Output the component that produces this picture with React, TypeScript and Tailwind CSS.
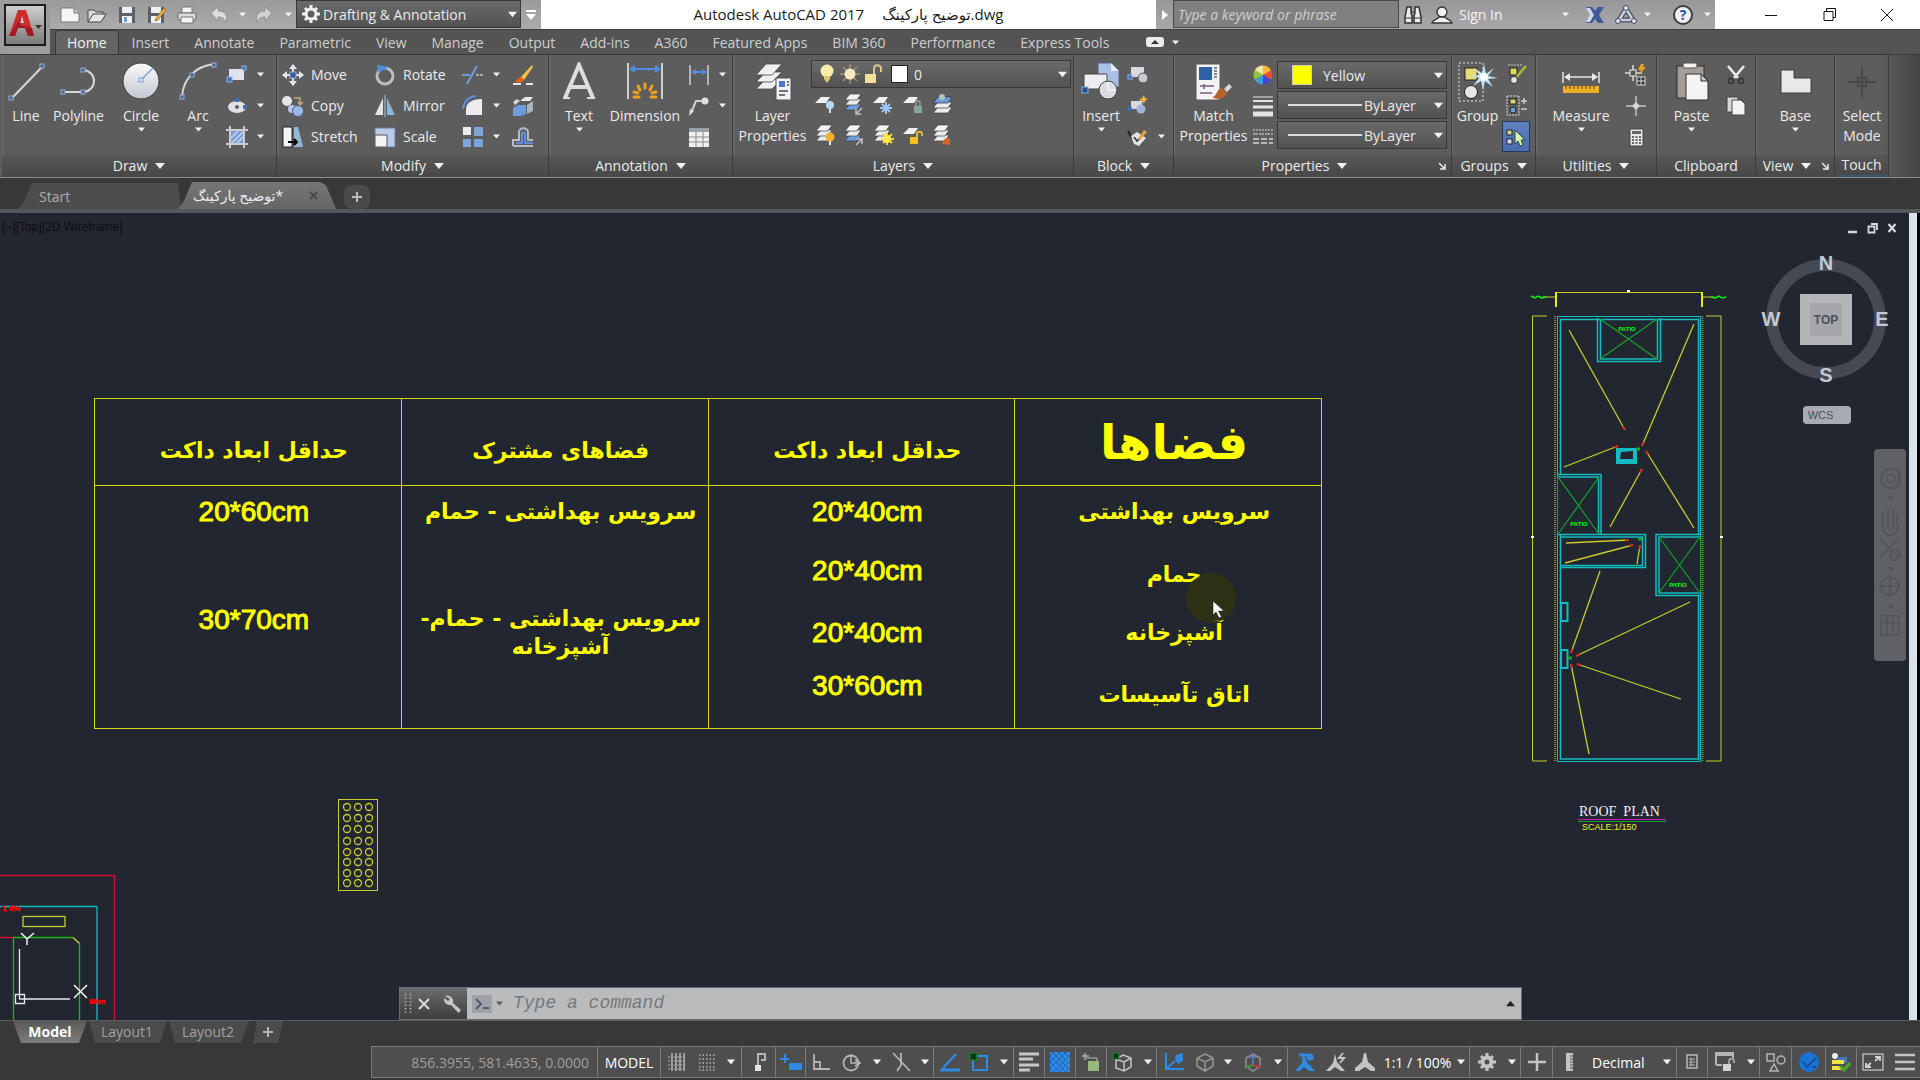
import React from "react";

type Kids = { children?: React.ReactNode };

const Svg = ({ w = 22, h = 22, children }: { w?: number; h?: number } & Kids) => (
  <svg width={w} height={h} viewBox={`0 0 ${w} ${h}`} fill="none" className="block shrink-0" aria-hidden="true">
    {children}
  </svg>
);

const Tri = ({ size = 7, color = "#f2f2f2", up = false }: { size?: number; color?: string; up?: boolean }) => (
  <svg width={size} height={size} viewBox="0 0 10 10" className="block shrink-0" aria-hidden="true">
    <path d={up ? "M0 8h10L5 2z" : "M0 2h10L5 8z"} fill={color} />
  </svg>
);

const Grip = ({ x, y }: { x: number; y: number }) => (
  <rect x={x - 2} y={y - 2} width="4" height="4" fill="#55607a" stroke="#8fb0ea" strokeWidth="1" />
);

/* ---------- large ribbon icons (40 x 40) ---------- */

const LineIcon = () => (
  <Svg w={40} h={40}>
    <path d="M6 36 36 5" stroke="#d8d8d8" strokeWidth="2" />
    <Grip x={5} y={36} />
    <Grip x={36} y={4} />
  </Svg>
);
const PolylineIcon = () => (
  <Svg w={40} h={40}>
    <path d="M3 30h21a11 11 0 0 0 0-22" stroke="#d8d8d8" strokeWidth="2" />
    <Grip x={4} y={30} />
    <Grip x={24} y={30} />
    <Grip x={24} y={8} />
  </Svg>
);
const CircleIcon = () => (
  <Svg w={40} h={40}>
    <defs>
      <linearGradient id="ball" x1="0" y1="0" x2="0" y2="1">
        <stop offset="0" stopColor="#fafafc" />
        <stop offset="1" stopColor="#c4c7d2" />
      </linearGradient>
    </defs>
    <circle cx="20" cy="19" r="18" fill="url(#ball)" stroke="#3a3a3a" strokeWidth="1" />
    <path d="M20 18 32 6" stroke="#7f9fdf" strokeWidth="1.5" />
    <rect x="18" y="16" width="4" height="4" fill="#dfe4f0" stroke="#7f9fdf" />
  </Svg>
);
const ArcIcon = () => (
  <Svg w={40} h={40}>
    <path d="M4 35C5 18 16 4 37 2" stroke="#d8d8d8" strokeWidth="2" />
    <Grip x={4} y={35} />
    <Grip x={14} y={13} />
    <Grip x={36} y={3} />
  </Svg>
);
const TextIcon = () => (
  <Svg w={40} h={40}>
    <path d="M6 36 20 3l14 33M11 25h18" stroke="#dedede" strokeWidth="4" />
    <path d="M4 36h7M28 36h8" stroke="#dedede" strokeWidth="2" />
  </Svg>
);
const DimensionIcon = () => (
  <Svg w={40} h={40}>
    <path d="M3 1v36M37 1v36" stroke="#cfcfcf" strokeWidth="2" />
    <path d="M5 7h30" stroke="#4f8ee0" strokeWidth="2" />
    <path d="M4 7l6-4v8zM36 7l-6-4v8z" fill="#4f8ee0" />
    <path d="M20 22v4M13 24l2 4M27 24l-2 4M9 30l4 1M31 30l-4 1M9 35h5M31 35h-5" stroke="#f0a020" strokeWidth="3" strokeLinecap="round" />
  </Svg>
);
const LayerPropsIcon = () => (
  <Svg w={40} h={40}>
    <g fill="#f0f0f0" stroke="#444" strokeWidth=".8">
      <path d="M3 27 13 17h16L19 27z" />
      <path d="M3 20 13 10h16L19 20z" />
      <path d="M3 13 13 2h16L19 13z" />
    </g>
    <rect x="23" y="16" width="15" height="22" fill="#f2f2f4" stroke="#555" />
    <rect x="26" y="19" width="6" height="6" fill="#4a78c4" />
    <path d="M34 20h2M34 23h2M26 29h9M26 33h6" stroke="#445" strokeWidth="1.5" />
  </Svg>
);
const InsertIcon = () => (
  <Svg w={40} h={40}>
    <path d="M17 1h13l8 8v16H17z" fill="#a9bfe4" stroke="#51648c" />
    <path d="M30 1v8h8z" fill="#e4ecfa" />
    <rect x="3" y="12" width="23" height="15" rx="1" fill="#eeeef2" stroke="#444" />
    <circle cx="27" cy="28" r="9" fill="#dcdde2" stroke="#444" />
    <path d="M27 20v8h8" stroke="#fff" />
    <rect x="1" y="25" width="6" height="6" fill="#2f4f86" stroke="#7fb0f0" />
  </Svg>
);
const MatchIcon = () => (
  <Svg w={40} h={40}>
    <rect x="2" y="2" width="24" height="36" fill="#f3f3f5" stroke="#555" />
    <rect x="5" y="5" width="13" height="13" fill="#2d62a4" />
    <path d="M20 6h3M20 9h3M20 12h3M20 15h3" stroke="#567" strokeWidth="1.5" />
    <path d="M6 24h14M10 22v5M6 31h12" stroke="#7a5a78" strokeWidth="1.5" />
    <path d="M18 35c5 0 4-8 10-9l5 5c-2 7-10 7-15 4z" fill="#b3642a" />
    <path d="M30 27l5-5 3 3-5 5z" fill="#d9d9d9" />
  </Svg>
);
const GroupIcon = () => (
  <Svg w={40} h={40}>
    <rect x="1" y="1" width="24" height="38" stroke="#e6e6e6" strokeDasharray="2 2" />
    <rect x="7" y="6" width="12" height="12" fill="#e6dc74" stroke="#222" />
    <circle cx="13" cy="30" r="6.5" fill="#e6e6e8" stroke="#222" />
    <path d="M26 2l2 10 8-6-6 8 10 2-10 1 5 8-8-6-2 9-2-9-8 5 6-8-9-2 9-1-5-7 8 5z" fill="#bfe4fb" />
    <circle cx="26" cy="15" r="4" fill="#fff" />
  </Svg>
);
const MeasureIcon = () => (
  <Svg w={40} h={40}>
    <path d="M2 10v11M38 10v11M4 15h32" stroke="#e8e8e8" strokeWidth="1.5" />
    <path d="M3 15l6-4v8zM37 15l-6-4v8z" fill="#e8e8e8" />
    <rect x="2" y="24" width="36" height="7" fill="#eeae28" />
    <path d="M5 24v3M9 24v3M13 24v3M17 24v3M21 24v3M25 24v3M29 24v3M33 24v3" stroke="#6b4a10" />
  </Svg>
);
const PasteIcon = () => (
  <Svg w={40} h={40}>
    <rect x="5" y="4" width="27" height="32" fill="#a39e9a" stroke="#2e2e2e" />
    <rect x="11" y="1" width="14" height="5" rx="2" fill="#f2f2f2" stroke="#555" />
    <path d="M14 12h15l7 7v19H14z" fill="#f4f4f4" stroke="#2e2e2e" />
    <path d="M29 12v7h7z" fill="#c9c9c9" stroke="#2e2e2e" />
  </Svg>
);
const BaseIcon = () => (
  <Svg w={40} h={40}>
    <path d="M5 8h13v8h17v15H5z" fill="#e9e9ec" stroke="#3a3a3a" />
  </Svg>
);
const SelectModeIcon = () => (
  <Svg w={40} h={40}>
    <path d="M20 4v32M5 20h30" stroke="#47494b" strokeWidth="2" />
    <rect x="16" y="16" width="8" height="8" stroke="#47494b" strokeWidth="2" />
  </Svg>
);

/* ---------- small ribbon icons (22 x 22) ---------- */

const RectIcon = () => (
  <Svg>
    <rect x="3" y="5" width="15" height="11" fill="#dfe3ec" />
    <rect x="1" y="13" width="5" height="5" fill="#3f6fb8" stroke="#8fb0ea" />
    <rect x="16" y="2" width="4" height="4" fill="#3f6fb8" stroke="#8fb0ea" />
  </Svg>
);
const EllipseIcon = () => (
  <Svg>
    <ellipse cx="11" cy="12" rx="9" ry="6" fill="#e0e2e8" />
    <circle cx="11" cy="12" r="2" fill="#5a626e" />
    <rect x="9" y="3" width="4" height="4" fill="#3f6fb8" />
    <rect x="17" y="10" width="4" height="4" fill="#3f6fb8" />
  </Svg>
);
const HatchIcon = () => (
  <Svg>
    <rect x="4" y="4" width="14" height="14" fill="#7d9fd2" />
    <path d="M5 12l7-7M5 18 17 6M11 17l6-6" stroke="#c4d8f4" strokeWidth="1.5" />
    <path d="M4 0v22M18 0v22M0 4h22M0 18h22" stroke="#c9ccd2" strokeWidth="2" />
  </Svg>
);
const MoveIcon = () => (
  <Svg>
    <path d="M11 0l4 5h-8zM11 22l4-5h-8zM0 11l5-4v8zM22 11l-5-4v8z" fill="#e6e6e6" />
    <path d="M11 4v14M4 11h14" stroke="#e6e6e6" strokeWidth="2" />
    <rect x="8" y="8" width="6" height="6" fill="#3a5a94" stroke="#8fb0ea" />
  </Svg>
);
const CopyIcon = () => (
  <Svg>
    <circle cx="5" cy="6" r="5" fill="#e4e6ea" />
    <path d="M12 3h6v6M16 7l2 3 3-3" stroke="#c9a680" strokeWidth="1.5" />
    <circle cx="10" cy="14" r="4" fill="#b7c9e8" />
    <circle cx="16" cy="16" r="5.5" fill="#9db8e2" stroke="#4c5f86" />
  </Svg>
);
const StretchIcon = () => (
  <Svg>
    <path d="M1 1h9v20H1z" fill="#f4f4f4" stroke="#222" />
    <path d="M12 1h4l5 20h-9z" fill="#93b7d8" />
    <path d="M6 16h9M12 13l3 3-3 3" stroke="#000" strokeWidth="2" />
  </Svg>
);
const RotateIcon = () => (
  <Svg>
    <circle cx="11" cy="12" r="8" stroke="#b9bcc0" strokeWidth="3" />
    <path d="M5 7a8 8 0 0 1 8-3" stroke="#4f8ee0" strokeWidth="3" />
    <path d="M3 1l7 1-6 7z" fill="#4f8ee0" />
  </Svg>
);
const MirrorIcon = () => (
  <Svg>
    <path d="M1 20 9 3v17z" fill="#e4e6ea" />
    <path d="M21 20 13 3v17z" fill="#8fb6d8" />
    <path d="M11 0v22" stroke="#a8c8e8" />
  </Svg>
);
const ScaleIcon = () => (
  <Svg>
    <path d="M1 2h20v19H1z" fill="#b9cbe8" stroke="#6c7ea4" />
    <path d="M1 9h12v12H1z" fill="#f4f4f6" stroke="#555" />
  </Svg>
);
const TrimIcon = () => (
  <Svg>
    <path d="M0 11h8" stroke="#6f9cda" strokeWidth="2" />
    <path d="M14 11h7" stroke="#a8a8a8" strokeWidth="2" strokeDasharray="3 1" />
    <path d="M5 20 15 2" stroke="#6f9cda" strokeWidth="2" />
  </Svg>
);
const FilletIcon = () => (
  <Svg>
    <path d="M4 20V15C4 8 9 4 20 4v16z" fill="#ececf0" />
    <path d="M1 14C2 6 6 2 14 1" stroke="#5f8fd8" strokeWidth="2" />
  </Svg>
);
const ArrayIcon = () => (
  <Svg>
    <rect x="1" y="1" width="8" height="8" fill="#ececf0" />
    <rect x="12" y="1" width="9" height="9" fill="#7da4dc" />
    <rect x="1" y="13" width="8" height="8" fill="#7da4dc" />
    <rect x="12" y="13" width="9" height="8" fill="#7da4dc" />
  </Svg>
);
const EraseIcon = () => (
  <Svg>
    <path d="M20 1 9 13l3 3L21 3z" fill="#f2c14a" />
    <path d="M9 13c-3 0-4 3-6 5 4 1 8 1 9-2z" fill="#e0641a" />
    <path d="M1 20h8M14 20h7" stroke="#e8e8e8" strokeWidth="2" />
  </Svg>
);
const ExplodeIcon = () => (
  <Svg>
    <path d="M1 13l5-3h8v9l-5 2H1z" fill="#6f9cda" />
    <path d="M9 5l4-3h8l-3 4H9z" fill="#e8e8e8" />
    <path d="M15 10l6-4v10l-6 3z" fill="#a9b4c4" />
    <path d="M1 7l4-3 3 2-5 4z" fill="#d2d6de" />
  </Svg>
);
const OffsetIcon = () => (
  <Svg>
    <path d="M1 20v-6h6V6c0-5 9-5 9 0v8h5M1 20h20" stroke="#b4bcc8" strokeWidth="2" />
    <path d="M4 17h6V8c0-2 3-2 3 0v9h8" stroke="#5f8fd8" strokeWidth="2" />
  </Svg>
);
const LinearDimIcon = () => (
  <Svg>
    <path d="M2 1v20M20 1v20" stroke="#d0d0d0" strokeWidth="1.5" />
    <path d="M4 8h14" stroke="#4f8ee0" strokeWidth="2" />
    <path d="M3 8l5-3v6zM19 8l-5-3v6z" fill="#4f8ee0" />
  </Svg>
);
const LeaderIcon = () => (
  <Svg>
    <path d="M3 18 8 6h6" stroke="#d0d0d0" strokeWidth="2" />
    <circle cx="17" cy="6" r="3.5" fill="#e0e0e0" />
    <path d="M1 21l1-7 4 2z" fill="#e0e0e0" />
  </Svg>
);
const TableIcon = () => (
  <Svg>
    <rect x="1" y="2" width="20" height="19" fill="#f0f0f0" />
    <rect x="1" y="2" width="20" height="4" fill="#9aa0a8" />
    <path d="M1 11h20M1 16h20M8 6v15M15 6v15" stroke="#8a8a8a" />
  </Svg>
);
const Sheets = ({ blue = false }: { blue?: boolean }) => (
  <g stroke="#444" strokeWidth=".7">
    <path d="M1 17 6 11h11l-4 6z" fill={blue ? "#6f9cda" : "#ececec"} />
    <path d="M1 12 6 6h11l-4 6z" fill="#ececec" />
    <path d="M1 7 6 1h11l-4 6z" fill="#f4f4f4" />
  </g>
);
const OneSheet = () => <path d="M0 10 6 4h9l-4 6z" fill="#f0f0f0" />;
const LayerOff = () => (
  <Svg><OneSheet /><circle cx="15" cy="12" r="4" fill="#b8d8f4" /><path d="M15 16v4" stroke="#e0e0e0" strokeWidth="2" /></Svg>
);
const LayerIso = () => (
  <Svg><Sheets blue /><path d="M18 15l-5 5M12 16v5h5" stroke="#c0c0c0" strokeWidth="1.5" /></Svg>
);
const LayerFreeze = () => (
  <Svg><OneSheet /><path d="M13 9v12M7 15h12M9 11l8 8M17 11l-8 8" stroke="#9cc8f4" strokeWidth="2" /></Svg>
);
const LayerLock = () => (
  <Svg><OneSheet /><rect x="11" y="13" width="8" height="7" fill="#86a59a" /><path d="M13 13v-3c0-3 4-3 4 0v3" stroke="#86a59a" strokeWidth="1.5" /></Svg>
);
const LayerCurrent = () => (
  <Svg>
    <g stroke="#334" strokeWidth=".7">
      <path d="M1 20 6 14h14l-4 6z" fill="#ececec" />
      <path d="M1 15 6 9h14l-4 6z" fill="#ececec" />
      <path d="M1 10 6 4h14l-4 6z" fill="#6f9cda" />
    </g>
    <circle cx="10" cy="4" r="3" fill="#a9cbb4" />
  </Svg>
);
const LayerOn = () => (
  <Svg><Sheets /><circle cx="15" cy="13" r="4.5" fill="#f0b030" /><path d="M15 17v4" stroke="#e8e8e8" strokeWidth="2" /></Svg>
);
const LayerUniso = () => (
  <Svg><Sheets blue /><path d="M12 21l5-5M13 15h5v5" stroke="#c8b8d8" strokeWidth="1.5" /></Svg>
);
const LayerThaw = () => (
  <Svg><Sheets /><path d="M14 8v13M8 15h13M10 10l9 9M19 10l-9 9" stroke="#f4d63a" strokeWidth="2" /><circle cx="14" cy="15" r="4" fill="#f8e850" /></Svg>
);
const LayerUnlock = () => (
  <Svg><OneSheet /><rect x="7" y="13" width="8" height="7" fill="#f0c020" /><path d="M14 13v-3c0-3 5-3 5 0v2" stroke="#f0c020" strokeWidth="1.8" /></Svg>
);
const LayerMatch = () => (
  <Svg><Sheets /><path d="M10 20c1-5 3-6 8-6v7z" fill="#c8682a" /></Svg>
);
const CreateBlock = () => (
  <Svg>
    <rect x="4" y="3" width="13" height="10" fill="#d8dae0" />
    <circle cx="16" cy="14" r="5" fill="#c8cad0" stroke="#555" />
    <rect x="1" y="11" width="4" height="4" fill="#3f6fb8" stroke="#8fb0ea" />
  </Svg>
);
const EditBlock = () => (
  <Svg>
    <rect x="4" y="6" width="11" height="8" fill="#d8dae0" />
    <circle cx="14" cy="14" r="4.5" fill="#9fb6dc" />
    <rect x="1" y="12" width="4" height="4" fill="#3f6fb8" />
    <path d="M17 0l1 3 3 1-3 2-1 3-2-3-3-1 3-2z" fill="#f0b040" />
  </Svg>
);
const EditAttr = () => (
  <Svg>
    <path d="M1 5l4 7" stroke="#202020" strokeWidth="2" />
    <path d="M4 10l6-4 9 6-7 8-5-2z" fill="#e4e4e4" />
    <path d="M7 11l3 4 6-6" stroke="#333" strokeWidth="1.5" />
    <path d="M11 13l6-9 3 2-7 8z" fill="#e8a040" />
  </Svg>
);
const ColorWheel = () => (
  <Svg>
    <circle cx="11" cy="11" r="9.5" fill="#e84a3a" />
    <path d="M11 11V1.5A9.5 9.5 0 0 1 19.200 6.200z" fill="#f4b83a" />
    <path d="M11 11 2.800 6.200A9.5 9.5 0 0 1 11 1.5z" fill="#e8eaa0" />
    <path d="M11 11 2.800 15.800A9.5 9.5 0 0 1 2.800 6.200z" fill="#8ac83a" />
    <path d="M11 11V20.5A9.5 9.5 0 0 1 2.800 15.800z" fill="#3aa0d8" />
    <path d="M11 11 19.200 15.800A9.5 9.5 0 0 1 11 20.5z" fill="#3a4ad0" />
  </Svg>
);
const WeightIcon = () => (
  <Svg>
    <path d="M1 2h20" stroke="#e4e4e4" />
    <path d="M1 6h20" stroke="#e4e4e4" strokeWidth="2" />
    <path d="M1 12h20" stroke="#e4e4e4" strokeWidth="3" />
    <path d="M1 19h20" stroke="#e4e4e4" strokeWidth="5" />
  </Svg>
);
const LinetypeIcon = () => (
  <Svg>
    <path d="M1 4h20" stroke="#d8d8d8" strokeDasharray="2 1" />
    <path d="M1 8h20" stroke="#d8d8d8" strokeDasharray="5 1" />
    <path d="M1 13h20M1 17h20" stroke="#d8d8d8" strokeWidth="1.5" strokeDasharray="6 2" />
  </Svg>
);
const UngroupIcon = () => (
  <Svg>
    <path d="M2 1h14" stroke="#ccc" strokeDasharray="2 1" />
    <rect x="4" y="4" width="7" height="7" fill="#dcd860" stroke="#222" />
    <circle cx="8" cy="16" r="3.5" fill="#e4e4e4" stroke="#333" />
    <path d="M20 2l-7 8-2 3" stroke="#a8b83a" strokeWidth="2.5" />
  </Svg>
);
const GroupEditIcon = () => (
  <Svg>
    <rect x="1" y="1" width="12" height="19" stroke="#ddd" strokeDasharray="2 1" />
    <rect x="4" y="4" width="6" height="5" fill="#e0d870" stroke="#222" />
    <circle cx="7" cy="15" r="3" fill="#6f9cda" stroke="#222" />
    <path d="M15 6h6M18 3v6M15 14h6" stroke="#ccc" strokeWidth="1.5" />
  </Svg>
);
const GroupSelectIcon = () => (
  <Svg>
    <rect x="2" y="4" width="5" height="5" fill="#e0d870" stroke="#223" />
    <rect x="2" y="13" width="5" height="5" fill="#e0e0e0" stroke="#223" />
    <path d="M10 4v14l3-3 2 5 3-1-2-5h4z" fill="#d8f0b0" stroke="#2a4a3a" />
  </Svg>
);
const QuickSelectIcon = () => (
  <Svg>
    <path d="M8 1v16M0 9h17" stroke="#ddd" strokeWidth="1.5" />
    <rect x="5" y="6" width="6" height="6" fill="#555" stroke="#eee" />
    <path d="M16 0l-3 6h3l-2 5 7-8h-3l1-3z" fill="#f0a020" />
    <rect x="12" y="13" width="8" height="8" fill="#333" stroke="#ddd" />
    <path d="M12 17h8M16 13v8" stroke="#ddd" />
  </Svg>
);
const PointIcon = () => (
  <Svg>
    <path d="M11 1v20M1 11h20" stroke="#c4c4c4" strokeWidth="1.5" />
    <path d="M11 7l4 4-4 4-4-4z" fill="#d8d8d8" />
  </Svg>
);
const CalcIcon = () => (
  <Svg>
    <rect x="5" y="3" width="13" height="17" fill="#e8e8e8" stroke="#444" />
    <rect x="7" y="5" width="9" height="3" fill="#666" />
    <path d="M7 11h9M7 14h9M7 17h9" stroke="#666" strokeWidth="2" strokeDasharray="2 1.5" />
  </Svg>
);
const CutIcon = () => (
  <Svg>
    <path d="M3 2l10 12M19 2 9 14" stroke="#ececec" strokeWidth="2.5" />
    <circle cx="6" cy="17" r="2.5" stroke="#333" strokeWidth="1.5" />
    <circle cx="16" cy="17" r="2.5" stroke="#333" strokeWidth="1.5" />
  </Svg>
);
const CopyClipIcon = () => (
  <Svg>
    <path d="M2 2h11v15H2z" fill="#d8d8d8" stroke="#444" />
    <path d="M7 5h9l4 4v11H7z" fill="#f4f4f4" stroke="#444" />
  </Svg>
);

/* ---------- ribbon building blocks ---------- */

const Big = ({ icon, label, second, arrow, cls }: { icon: React.ReactNode; label: string; second?: string; arrow?: boolean; cls: string }) => (
  <button type="button" className={`flex h-full shrink-0 flex-col items-center pt-[7px] leading-5 whitespace-nowrap text-[#ececec] ${cls}`}>
    {icon}
    <span className="mt-1">{label}</span>
    {second && <span>{second}</span>}
    {arrow && <Tri />}
  </button>
);

const Small = ({ icon, label, cls = "", name }: { icon: React.ReactNode; label?: string; cls?: string; name?: string }) => (
  <button type="button" aria-label={label ? undefined : name} className={`flex h-[31px] items-center gap-[7px] whitespace-nowrap text-[#ececec] ${cls}`}>
    {icon}
    {label}
  </button>
);

const DropBtn = ({ name, cls = "w-5" }: { name: string; cls?: string }) => (
  <button type="button" aria-label={name} className={`flex h-full items-center justify-center ${cls}`}>
    <Tri />
  </button>
);

const Split = ({ icon, name }: { icon: React.ReactNode; name: string }) => (
  <div className="flex h-[31px] items-center">
    <Small icon={icon} name={name} />
    <DropBtn name={`${name} options`} cls="w-6" />
  </div>
);

const Col = ({ children, cls = "" }: Kids & { cls?: string }) => <div className={`flex shrink-0 flex-col pt-1 ${cls}`}>{children}</div>;

const Panel = ({ title, arrow = true, launcher, cls, children, accent }: Kids & { title: string; arrow?: boolean; launcher?: boolean; cls: string; accent?: boolean }) => (
  <section aria-label={title} className={`flex shrink-0 flex-col border-r border-[#3c3c3c] ${cls}`}>
    <div className="flex h-[100px] border-l border-[#6c6c6c]">{children}</div>
    <div className={`relative flex h-[22px] items-center justify-center bg-linear-to-b from-[#565656] to-[#484848] leading-5 text-[#ececec] ${launcher ? "pr-4" : ""} ${accent ? "border-b-2 border-[#3b5a70]" : ""}`}>
      <button type="button" className="flex items-center gap-2">
        {title}
        {arrow && <Tri size={10} />}
      </button>
      {launcher && (
        <button type="button" aria-label={`${title} settings`} className="absolute right-1 top-[6px]">
          <Svg w={10} h={10}>
            <path d="M2 2l6 6M8 3v5H3" stroke="#e8e8e8" strokeWidth="1.5" />
          </Svg>
        </button>
      )}
    </div>
  </section>
);

const comboCls = "relative flex items-center border border-[#383838] bg-linear-to-b from-[#6a6a6a] to-[#525252]";

const Combo = ({ name, value, cls, pad, children }: Kids & { name: string; value: string; cls: string; pad: string }) => (
  <div className={`${comboCls} ${cls}`}>
    <select aria-label={name} className={`h-full w-full appearance-none bg-transparent text-[#ececec] outline-none ${pad}`}>
      <option>{value}</option>
    </select>
    <div className="pointer-events-none absolute inset-0 flex items-center">
      {children}
      <span className="ml-auto mr-[3px]">
        <Tri size={9} />
      </span>
    </div>
  </div>
);

/* ---------- title bar ---------- */

const QButton = ({ name, cls, children }: Kids & { name: string; cls: string }) => (
  <button type="button" aria-label={name} className={`flex h-full shrink-0 items-center justify-center ${cls}`}>
    {children}
  </button>
);

const TitleBar = () => (
  <div className="flex h-[29px] bg-white text-[14px]">
    <div className="flex shrink-0 items-center bg-linear-to-b from-[#9a9a9c] to-[#acacac]">
      <QButton name="New" cls="w-[32px] pl-2">
        <Svg w={20} h={20}><path d="M1 3h13l5 5v9H1z" fill="#f6f6f6" stroke="#777" /><path d="M14 3v5h5" fill="#ccc" stroke="#777" /></Svg>
      </QButton>
      <QButton name="Open" cls="w-[30px]">
        <Svg w={20} h={20}><path d="M1 17V5h6l2 2h7v3" fill="#ddd" stroke="#444" /><path d="M1 17l5-8h13l-5 8z" fill="#e6e6e6" stroke="#444" /></Svg>
      </QButton>
      <QButton name="Save" cls="w-[30px]">
        <Svg w={18} h={20}><rect x="1" y="2" width="16" height="16" fill="#5c6068" /><rect x="4" y="2" width="10" height="6" fill="#f0f0f0" /><rect x="4" y="11" width="10" height="7" fill="#f0f0f0" /><rect x="6" y="12" width="3" height="5" fill="#6f9cda" /></Svg>
      </QButton>
      <QButton name="Save As" cls="w-[30px]">
        <Svg w={20} h={20}><rect x="1" y="2" width="16" height="16" fill="#5c6068" /><rect x="4" y="2" width="10" height="6" fill="#f0f0f0" /><rect x="4" y="11" width="10" height="7" fill="#f0f0f0" /><path d="M17 3l2 2-8 10-3 1 1-3z" fill="#f0b040" stroke="#7a5010" strokeWidth=".6" /></Svg>
      </QButton>
      <QButton name="Plot" cls="w-[30px]">
        <Svg w={20} h={20}><path d="M5 2h10v6H5z" fill="#f4f4f4" stroke="#777" /><rect x="1" y="8" width="18" height="7" rx="1" fill="#dcdcdc" stroke="#666" /><path d="M4 12h12v6H4z" fill="#f4f4f4" stroke="#777" /></Svg>
      </QButton>
      <QButton name="Undo" cls="w-[34px]">
        <Svg w={18} h={20}><path d="M1 8l7-6v4c7 0 10 4 8 12-1-4-3-6-8-6v4z" fill="#dedede" stroke="#888" strokeWidth=".8" /></Svg>
      </QButton>
      <DropBtn name="Undo list" cls="w-[12px]" />
      <QButton name="Redo" cls="w-[32px]">
        <Svg w={18} h={20}><path d="M17 8l-7-6v4c-7 0-10 4-8 12 1-4 3-6 8-6v4z" fill="#d2d2d2" stroke="#888" strokeWidth=".8" /></Svg>
      </QButton>
      <DropBtn name="Redo list" cls="w-[16px]" />
      <Combo name="Workspace" value="Drafting &amp; Annotation" cls="h-[28px] w-[225px] self-start" pad="pl-[26px]">
        <span className="ml-[5px]">
          <Svg w={18} h={18}>
            <circle cx="9" cy="9" r="5" stroke="#f0f0f0" strokeWidth="3" />
            <path d="M9 0v4M9 14v4M0 9h4M14 9h4M3 3l2 2M13 13l2 2M15 3l-2 2M3 15l2-2" stroke="#f0f0f0" strokeWidth="3" />
          </Svg>
        </span>
      </Combo>
      <QButton name="Customize Quick Access Toolbar" cls="w-[20px]">
        <Svg w={10} h={12}><path d="M0 2h10" stroke="#fff" strokeWidth="2" /><path d="M0 5h10L5 11z" fill="#fff" /></Svg>
      </QButton>
    </div>
    <h1 className="flex min-w-0 flex-1 items-center justify-center gap-[18px] whitespace-nowrap text-[15px] text-[#1c1c1c]">
      <span>Autodesk AutoCAD 2017</span>
      <bdi dir="ltr">{"\u062A\u0648\u0636\u06CC\u062D \u067E\u0627\u0631\u06A9\u06CC\u0646\u06AF"}.dwg</bdi>
    </h1>
    <div className="flex shrink-0 items-center bg-linear-to-b from-[#98989a] to-[#a8a8aa]">
      <QButton name="Show search" cls="w-[17px]">
        <Svg w={6} h={10}><path d="M0 0l6 5-6 5z" fill="#fff" /></Svg>
      </QButton>
      <input aria-label="Search" placeholder="Type a keyword or phrase" className="h-[28px] w-[226px] self-start border border-[#4a4a4a] bg-[#808080] px-1 italic outline-none placeholder:text-[#cfcfcf]" />
      <QButton name="Find" cls="w-[28px]">
        <Svg w={20} h={20}>
          <path d="M4 2h4v6l1 3v7H2v-6zM16 2h-4v6l-1 3v7h7v-6z" fill="#ececec" stroke="#333" strokeWidth="1.5" />
          <path d="M8 7h4M2 13h7M11 13h7" stroke="#333" />
        </Svg>
      </QButton>
      <button type="button" className="flex h-full w-[142px] items-center gap-[6px] pl-1 text-[#f4f4f4]">
        <Svg w={22} h={20}><circle cx="11" cy="7" r="5" fill="#f0f0f0" stroke="#333" strokeWidth="1.3" /><path d="M1 18c1-4 6-3 7-6h6c1 3 6 2 7 6z" fill="#f0f0f0" stroke="#333" strokeWidth="1.3" /></Svg>
        Sign In
        <span className="ml-auto"><Tri /></span>
      </button>
      <QButton name="Exchange Apps" cls="w-[44px] pl-2">
        <Svg w={20} h={18}><path d="M1 1h6l3 4 3-4h6l-5 8 5 8h-6l-3-4-3 4H1l5-8z" fill="#3f5a94" /><path d="M1 2h4l4 7-4 7H1l4-7z" fill="#cfd8ea" /></Svg>
      </QButton>
      <QButton name="Autodesk 360" cls="w-[26px]">
        <Svg w={22} h={20}><path d="M11 4 4 15h14z" stroke="#444a5c" strokeWidth="5" strokeLinejoin="round" /><path d="M11 4 4 15h14z" stroke="#c8cede" strokeWidth="2.5" strokeLinejoin="round" /><circle cx="11" cy="3" r="2.5" fill="#dfe4ee" stroke="#444a5c" /><circle cx="3" cy="16" r="2.5" fill="#dfe4ee" stroke="#444a5c" /><circle cx="19" cy="16" r="2.5" fill="#dfe4ee" stroke="#444a5c" /></Svg>
      </QButton>
      <DropBtn name="360 menu" cls="w-[16px]" />
      <QButton name="Help" cls="w-[44px] pl-3">
        <span className="flex h-5 w-5 items-center justify-center rounded-full border-2 border-[#3c3c40] bg-[#f0f0f4] font-bold text-[#2c50a8]">?</span>
      </QButton>
      <DropBtn name="Help menu" cls="w-[16px]" />
    </div>
    <div className="flex shrink-0 items-center pl-[27px] pr-[4px]">
      <QButton name="Minimize" cls="w-[58px]"><Svg w={12} h={12}><path d="M0 6.5h12" stroke="#111" /></Svg></QButton>
      <QButton name="Restore" cls="w-[58px]"><Svg w={13} h={13}><path d="M1 3.5h9v9H1zM3.5 3V.5h9v9H10" stroke="#111" /></Svg></QButton>
      <QButton name="Close" cls="w-[58px]"><Svg w={12} h={12}><path d="M0 0l12 12M12 0 0 12" stroke="#111" /></Svg></QButton>
    </div>
  </div>
);

const ribbonTabs = ["Home", "Insert", "Annotate", "Parametric", "View", "Manage", "Output", "Add-ins", "A360", "Featured Apps", "BIM 360", "Performance", "Express Tools"];

const Header = () => (
  <header className="flex">
    <div className="flex h-[54px] w-[50px] shrink-0 justify-center bg-[#9c9c9e] pt-1">
      <button type="button" aria-label="Application menu" className="flex h-[42px] w-[42px] items-center justify-center border-2 border-[#1c1c1c] bg-linear-to-b from-[#d0d0d0] to-[#7c7c7c]">
        <Svg w={36} h={34}>
          <path d="M2 28 11 2h8l8 26h-6l-3-8h-7l-3 8z" fill="#cf2b2f" />
          <path d="M2 28 15 8l-2 9 12 3 2 8h-6l-3-8h-7l-3 8z" fill="#a31a22" />
          <path d="M13 15 15 8l2 7z" fill="#c9c9c9" />
          <path d="M28 17h7l-3.5 4z" fill="#333" />
        </Svg>
      </button>
    </div>
    <div className="min-w-0 flex-1">
      <TitleBar />
      <nav aria-label="Ribbon tabs" className="flex h-[25px] items-stretch gap-px border-t border-[#3f3f3f] bg-[#545454] pl-[5px] text-[14px] text-[#cecece]">
        {ribbonTabs.map((t, i) => (
          <button key={t} type="button" className={i === 0 ? "rounded-t-sm border border-b-0 border-[#3a3a3a] bg-[#646464] px-[11px] text-[#f0f0f0]" : "px-3"}>
            {t}
          </button>
        ))}
        <button type="button" aria-label="Minimize ribbon" className="ml-6 flex items-center">
          <Svg w={18} h={10}><rect width="18" height="10" rx="3" fill="#ececec" /><path d="M5 7h8L9 3z" fill="#333" /></Svg>
        </button>
        <DropBtn name="Ribbon display" />
      </nav>
    </div>
  </header>
);

const Ribbon = () => (
  <div className="flex h-[124px] border-b border-t border-b-[#8a8a8a] border-t-[#3a3a3a] bg-linear-to-r from-[#5d5d5d] from-98% to-[#444] pl-[2px] text-[14px]">
    <Panel title="Draw" cls="w-[275px]">
      <Big cls="w-[46px]" icon={<LineIcon />} label="Line" />
      <Big cls="w-[59px]" icon={<PolylineIcon />} label="Polyline" />
      <Big cls="w-[66px]" icon={<CircleIcon />} label="Circle" arrow />
      <Big cls="w-[48px]" icon={<ArcIcon />} label="Arc" arrow />
      <Col cls="pl-1">
        <Split icon={<RectIcon />} name="Rectangle" />
        <Split icon={<EllipseIcon />} name="Ellipse" />
        <Split icon={<HatchIcon />} name="Hatch" />
      </Col>
    </Panel>
    <Panel title="Modify" cls="w-[272px]">
      <Col cls="w-[92px] pl-1">
        <Small icon={<MoveIcon />} label="Move" />
        <Small icon={<CopyIcon />} label="Copy" />
        <Small icon={<StretchIcon />} label="Stretch" />
      </Col>
      <Col cls="w-[92px] pl-1">
        <Small icon={<RotateIcon />} label="Rotate" />
        <Small icon={<MirrorIcon />} label="Mirror" />
        <Small icon={<ScaleIcon />} label="Scale" />
      </Col>
      <Col>
        <Split icon={<TrimIcon />} name="Trim" />
        <Split icon={<FilletIcon />} name="Fillet" />
        <Split icon={<ArrayIcon />} name="Array" />
      </Col>
      <Col cls="pl-1">
        <Small icon={<EraseIcon />} name="Erase" />
        <Small icon={<ExplodeIcon />} name="Explode" />
        <Small icon={<OffsetIcon />} name="Offset" />
      </Col>
    </Panel>
    <Panel title="Annotation" cls="w-[184px]">
      <Big cls="w-[54px] pl-1" icon={<TextIcon />} label="Text" arrow />
      <Big cls="w-[82px]" icon={<DimensionIcon />} label="Dimension" />
      <Col cls="pl-[2px]">
        <Split icon={<LinearDimIcon />} name="Linear" />
        <Split icon={<LeaderIcon />} name="Leader" />
        <Small icon={<TableIcon />} name="Table" />
      </Col>
    </Panel>
    <Panel title="Layers" cls="w-[341px]">
      <Big cls="w-[77px]" icon={<LayerPropsIcon />} label="Layer" second="Properties" />
      <div className="flex flex-1 flex-col pr-[2px] pt-[5px]">
        <Combo name="Layer" value="0" cls="h-[28px]" pad="pl-[102px]">
          <span className="ml-[6px] flex items-center gap-[3px]">
            <Svg w={18} h={22}><circle cx="9" cy="8" r="6.5" fill="#f6eeaa" /><path d="M6 13h6v3l-3 4-3-4z" fill="#e0c870" /></Svg>
            <Svg w={22}><path d="M11 1v20M1 11h20M4 4l14 14M18 4 4 18" stroke="#a89070" strokeWidth="1.5" /><circle cx="11" cy="11" r="5.5" fill="#f6e8c0" /></Svg>
            <Svg w={20}><rect x="1" y="11" width="11" height="9" fill="#f0e09a" /><path d="M10 11V6c0-5 7-5 7 0v3" stroke="#d8c890" strokeWidth="2" /></Svg>
            <span className="ml-1 h-[18px] w-[17px] border border-[#222] bg-white" />
          </span>
        </Combo>
        <div className="grid w-[150px] grid-cols-5 pl-1">
          <Small icon={<LayerOff />} name="Off" />
          <Small icon={<LayerIso />} name="Isolate" />
          <Small icon={<LayerFreeze />} name="Freeze" />
          <Small icon={<LayerLock />} name="Lock" />
          <Small icon={<LayerCurrent />} name="Make current" />
          <Small icon={<LayerOn />} name="Turn all layers on" />
          <Small icon={<LayerUniso />} name="Unisolate" />
          <Small icon={<LayerThaw />} name="Thaw all layers" />
          <Small icon={<LayerUnlock />} name="Unlock" />
          <Small icon={<LayerMatch />} name="Match layer" />
        </div>
      </div>
    </Panel>
    <Panel title="Block" cls="w-[100px]">
      <Big cls="w-[52px]" icon={<InsertIcon />} label="Insert" arrow />
      <Col>
        <Small icon={<CreateBlock />} name="Create block" />
        <Small icon={<EditBlock />} name="Edit block" />
        <Split icon={<EditAttr />} name="Edit attributes" />
      </Col>
    </Panel>
    <Panel title="Properties" launcher cls="w-[278px]">
      <Big cls="w-[77px]" icon={<MatchIcon />} label="Match" second="Properties" />
      <Col>
        <Small icon={<ColorWheel />} name="Object color" />
        <Small icon={<WeightIcon />} name="Lineweight" />
        <Small icon={<LinetypeIcon />} name="Linetype" />
      </Col>
      <div className="ml-[3px] mr-1 flex flex-1 flex-col gap-[2px] pt-[6px]">
        <Combo name="Object color" value="Yellow" cls="h-[28px]" pad="pl-[45px]">
          <span className="ml-[14px] h-[20px] w-[20px] border border-[#d0d0a0] bg-[#ffff00]" />
        </Combo>
        <Combo name="Lineweight" value="ByLayer" cls="h-[28px]" pad="pl-[86px]">
          <span className="ml-[10px] h-[2px] w-[74px] bg-[#dcdcdc]" />
        </Combo>
        <Combo name="Linetype" value="ByLayer" cls="h-[28px]" pad="pl-[86px]">
          <span className="ml-[10px] h-[2px] w-[74px] bg-[#dcdcdc]" />
        </Combo>
      </div>
    </Panel>
    <Panel title="Groups" cls="w-[84px]">
      <Big cls="w-[49px]" icon={<GroupIcon />} label="Group" />
      <Col>
        <Small icon={<UngroupIcon />} name="Ungroup" cls="pl-1" />
        <Small icon={<GroupEditIcon />} name="Group edit" cls="pl-1" />
        <Small icon={<GroupSelectIcon />} name="Group selection" cls="border border-[#26365c] bg-linear-to-b from-[#5f80bc] to-[#4c6cae] px-[2px]" />
      </Col>
    </Panel>
    <Panel title="Utilities" cls="w-[121px]">
      <Big cls="w-[88px]" icon={<MeasureIcon />} label="Measure" arrow />
      <Col>
        <Small icon={<QuickSelectIcon />} name="Quick select" />
        <Small icon={<PointIcon />} name="ID point" />
        <Small icon={<CalcIcon />} name="Quick calculator" />
      </Col>
    </Panel>
    <Panel title="Clipboard" arrow={false} cls="w-[99px]">
      <Big cls="w-[67px]" icon={<PasteIcon />} label="Paste" arrow />
      <Col>
        <Small icon={<CutIcon />} name="Cut" />
        <Small icon={<CopyClipIcon />} name="Copy clip" />
      </Col>
    </Panel>
    <Panel title="View" launcher cls="w-[79px]">
      <Big cls="flex-1" icon={<BaseIcon />} label="Base" arrow />
    </Panel>
    <Panel title="Touch" arrow={false} accent cls="w-[54px]">
      <Big cls="flex-1" icon={<SelectModeIcon />} label="Select" second="Mode" />
    </Panel>
  </div>
);

const FileTabs = () => (
  <div className="flex h-[35px] items-end border-b-4 border-[#54585b] bg-[#383838] pl-[18px] text-[14px]">
    <button type="button" className="h-[26px] w-[168px] bg-[#4c4c4c] pl-[21px] text-left text-[#adadad] [clip-path:polygon(14px_0,160px_0,163px_100%,0_100%,6px_70%)]">
      Start
    </button>
    <div className="-ml-2 flex h-[27px] w-[158px] items-center bg-linear-to-b from-[#767676] to-[#666] pl-[15px] text-[#ececec] [clip-path:polygon(14px_0,142px_0,148px_12%,158px_100%,0_100%,6px_70%)]">
      <button type="button"><bdi dir="rtl">*{"\u062A\u0648\u0636\u06CC\u062D \u067E\u0627\u0631\u06A9\u06CC\u0646\u06AF"}</bdi></button>
      <button type="button" aria-label="Close drawing" className="ml-auto mr-[18px]">
        <Svg w={9} h={9}><path d="M1 1l7 7M8 1 1 8" stroke="#4a4a4a" strokeWidth="2" /></Svg>
      </button>
    </div>
    <button type="button" aria-label="New drawing" className="ml-2 flex h-[24px] w-[26px] items-center justify-center rounded-lg bg-[#4a4a4a]">
      <Svg w={10} h={10}><path d="M5 0v10M0 5h10" stroke="#bdbdbd" strokeWidth="2" /></Svg>
    </button>
  </div>
);

/* ---------- drawing area ---------- */

const cellAr = "text-[22px] font-bold leading-7 whitespace-nowrap";
const cellNum = "font-[Liberation_Sans] text-[28px] leading-8 [-webkit-text-stroke:1px_#ffff00]";

const DuctTable = () => (
  <table dir="rtl" className="absolute left-[94px] top-[185px] w-[1228px] table-fixed border-collapse text-center text-[#ffff00] font-['DejaVu_Sans',sans-serif] [&_td]:pl-3 [&_th]:pl-3">
    <thead>
      <tr className="h-[87px] [&>th]:border [&>th]:border-[#d6d61c] [&>th]:align-middle">
        <th className="text-[48px] leading-12">{"فضاها"}</th>
        <th className="pt-4 text-[22px]">{"حداقل ابعاد داکت"}</th>
        <th className="pt-4 text-[22px]">{"فضاهای مشترک"}</th>
        <th className="pt-4 text-[22px]">{"حداقل ابعاد داکت"}</th>
      </tr>
    </thead>
    <tbody className="border border-[#d6d61c] [&_td]:border-x [&_td]:border-[#d6d61c]">
      <tr className="h-[52px]">
        <td className={cellAr}>{"سرویس بهداشتی"}</td>
        <td className={cellNum} dir="ltr">20*40cm</td>
        <td className={cellAr}>{"سرویس بهداشتی - حمام"}</td>
        <td className={cellNum} dir="ltr">20*60cm</td>
      </tr>
      <tr className="h-[66px]">
        <td className={`${cellAr} pt-2`}>{"حمام"}</td>
        <td className={cellNum} dir="ltr">20*40cm</td>
        <td />
        <td />
      </tr>
      <tr className="h-[58px]">
        <td className={cellAr}>{"آشپزخانه"}</td>
        <td className={cellNum} dir="ltr">20*40cm</td>
        <td className={cellAr}>{"سرویس بهداشتی - حمام-"}<br />{"آشپزخانه"}</td>
        <td className={`${cellNum} align-top`} dir="ltr">30*70cm</td>
      </tr>
      <tr className="h-[67px]">
        <td className={cellAr}>{"اتاق تآسیسات"}</td>
        <td className={`${cellNum} align-top pt-2`} dir="ltr">30*60cm</td>
        <td />
        <td />
      </tr>
    </tbody>
  </table>
);

const Y = "#c8cc2c";
const C = "#12bcc0";
const G = "#14a32c";

const slopes: [number, number, number, number][] = [
  [69, 90, 125, 190], [194, 84, 142, 206], [64, 227, 118, 206], [110, 287, 142, 229], [194, 288, 146, 211],
  [66, 303, 129, 300], [65, 323, 133, 305], [137, 324, 140, 305],
  [100, 331, 71, 413], [190, 362, 76, 416], [181, 459, 77, 424], [89, 514, 71, 424],
];

const Patio = ({ x, y, w, h, tx, ty }: { x: number; y: number; w: number; h: number; tx: number; ty: number }) => (
  <g>
    <path d={`M${x} ${y}l${w} ${h}M${x + w} ${y}l${-w} ${h}`} stroke={G} strokeWidth="1.2" />
    <text x={tx} y={ty} fill="#0f0" fontSize="6" fontWeight="bold" textAnchor="middle">PATIO</text>
  </g>
);

const RoofPlan = () => (
  <svg width="240" height="600" viewBox="0 0 240 600" fill="none" className="absolute right-[169px] top-[27px] font-['Liberation_Sans']">
    <title>Roof plan</title>
    <path d="M55 52.5h148M43 57h13M202 57h12M47 76H32.5v445H47M206 76h15v445h-15" stroke={Y} />
    <path d="M56 52v15M202 52v15" stroke="#e8e820" strokeWidth="2" />
    <path d="M127 51h3M31 297h3M220 297h3" stroke="#fff" strokeWidth="2" />
    <path d="M31 56l4 2 3-2 4 2 4-1M211 57l4 1 4-2 3 2 4-1" stroke="#0f0" strokeWidth="1.5" />
    <path d="M55 76v445M202.5 76v445" stroke="#8f8632" strokeWidth="2" strokeDasharray="1 1" />
    <rect x="57.5" y="76.5" width="143" height="445" stroke={C} />
    <path d="M60 79.5h138.5V295M198.5 355v164H60.5V295M60.5 235V79" stroke={C} strokeWidth="1.5" />
    <path d="M97.5 78v43.5h63V78M100.5 79v40h57V79" stroke={C} strokeWidth="1.5" />
    <path d="M58 234.5h43v60M58 237h40.5v58" stroke={C} strokeWidth="1.5" />
    <path d="M58 294.5h87.5v33H60M60 297h82.5v28.5H60" stroke={C} strokeWidth="1.5" />
    <path d="M200 294.5h-44v61h44M200 297h-41v56h41" stroke={C} strokeWidth="1.5" />
    <path d="M57.5 236v58M200.5 297v56" stroke={G} />
    <Patio x={100} y={79} w={57} h={40} tx={127} ty={91} />
    <Patio x={58} y={237} w={41} h={57} tx={79} ty={286} />
    <Patio x={159} y={297} w={41} h={56} tx={178} ty={347} />
    <rect x="116" y="208" width="21" height="16" fill={C} />
    <path d="M121 212l12-1v8h-13z" fill="#222631" />
    <rect x="61" y="363" width="6.5" height="18" stroke={C} strokeWidth="2" />
    <rect x="61" y="410" width="6.5" height="18" stroke={C} strokeWidth="2" />
    {slopes.map(([x1, y1, x2, y2]) => {
      const d = Math.hypot(x2 - x1, y2 - y1);
      const rx = x2 - ((x2 - x1) / d) * 4;
      const ry = y2 - ((y2 - y1) / d) * 4;
      return (
        <g key={`${x1}-${y1}`}>
          <path d={`M${x1} ${y1}L${x2} ${y2}`} stroke={Y} strokeWidth="1.3" />
          <path d={`M${rx} ${ry}L${x2} ${y2}`} stroke="#e02818" strokeWidth="2" />
        </g>
      );
    })}
    <path d="M136 209h4M138 299h4M68 418h4" stroke={G} strokeWidth="3" />
    <text x="79" y="576" fill="#f0f0f0" fontSize="14" fontFamily="Liberation Serif" xmlSpace="preserve">ROOF  PLAN</text>
    <path d="M78 579.5h88" stroke="#c020c0" />
    <path d="M78 581.5h88" stroke={G} />
    <text x="82" y="590" fill="#f0f020" fontSize="9">SCALE:1/150</text>
  </svg>
);

const ViewCube = () => (
  <div className="absolute right-[17px] top-[37px] flex w-[131px] flex-col items-center font-['Liberation_Sans']">
    <svg width="131" height="138" viewBox="0 0 131 138" fill="none">
      <title>View cube</title>
      <circle cx="65" cy="69" r="54" stroke="#454954" strokeWidth="12" />
      <rect x="39" y="44" width="52" height="51" fill="#b4b5b9" />
      <rect x="49" y="53" width="32" height="33" fill="#a6a7ab" />
      <g fill="#c4c8d0" fontSize="20" fontWeight="bold" textAnchor="middle">
        <text x="65" y="20">N</text>
        <text x="65" y="132">S</text>
        <text x="10" y="76">W</text>
        <text x="121" y="76">E</text>
      </g>
      <text x="65" y="74" fill="#4e5056" fontSize="12" fontWeight="bold" textAnchor="middle">TOP</text>
    </svg>
    <button type="button" className="mt-[18px] h-[18px] w-[48px] rounded bg-[#a9abb4] pr-3 text-[11px] leading-[16px] text-[#4c4e56]">WCS</button>
  </div>
);

const NavBar = () => (
  <div className="absolute right-[3px] top-[236px] flex h-[212px] w-[32px] flex-col items-center rounded bg-[#5f6164] py-4">
    <svg width="26" height="184" viewBox="0 0 26 184" fill="none" stroke="#525457" strokeWidth="1.5">
      <title>Navigation bar</title>
      <circle cx="14" cy="14" r="10" /><circle cx="14" cy="14" r="4" /><path d="M22 5v14" />
      <path d="M12 33h4l-2 3z" />
      <path d="M6 48v18M11 46v20M16 46v20M20 50v12M6 66c4 8 12 8 15-2" />
      <path d="M3 76l18 18M21 76 3 94" /><circle cx="18" cy="92" r="5" />
      <path d="M12 105h4l-2 3z" />
      <circle cx="13" cy="124" r="9" /><path d="M13 112v24M2 124h22" />
      <path d="M12 144h4l-2 3z" />
      <rect x="4" y="154" width="18" height="20" /><path d="M4 161h18M10 154v20M16 154v20" />
    </svg>
  </div>
);

const DotBlock = () => (
  <svg width="42" height="94" viewBox="0 0 42 94" fill="none" stroke="#c8cc2c" className="absolute left-[337px] top-[585px]">
    <title>Perforated block</title>
    <rect x="1.5" y="1.5" width="39" height="91" />
    {[9, 20, 31, 43, 54, 64, 75, 85].map((y) => [10, 21, 32].map((x) => <circle key={`${x}-${y}`} cx={x} cy={y} r="3.5" strokeWidth="1.3" />))}
  </svg>
);

const CornerPlan = () => (
  <svg width="120" height="150" viewBox="0 0 120 150" fill="none" className="absolute bottom-0 left-0 font-['Liberation_Sans']">
    <title>Coordinate axes</title>
    <path d="M0 5.5h114.5V150M0 67.5h13" stroke="#c81424" strokeWidth="1.3" />
    <path d="M0 36.5h97V150" stroke={C} strokeWidth="1.3" />
    <rect x="23" y="46.5" width="42" height="10" stroke={Y} strokeWidth="1.3" />
    <path d="M13.5 150V67.5H73M79.5 74v76" stroke="#18b818" strokeWidth="1.3" />
    <path d="M73 67.5l6.5 6" stroke={Y} strokeWidth="1.5" />
    <path d="M19.5 79v50H70M15.5 124.5h9v9h-9z" stroke="#e8e8ec" strokeWidth="1.3" />
    <path d="M21 63l6 6 7-6M27 69v6M74 115l13 13M87 115l-13 13" stroke="#f4f4f4" strokeWidth="1.5" />
    <text x="2" y="41" fill="#f00" stroke="#f00" strokeWidth=".5" fontSize="8" fontWeight="bold">1 4%</text>
    <text x="89" y="134" fill="#f00" stroke="#f00" strokeWidth=".5" fontSize="8" fontWeight="bold">80m</text>
  </svg>
);

const Pointer = () => (
  <div className="absolute left-[1186px] top-[360px] h-[50px] w-[50px] rounded-full bg-[#313410]/85">
    <svg width="14" height="20" viewBox="0 0 14 20" className="ml-[26px] mt-[27px]">
      <path d="M1 1v14l3-3 3 6 2.5-1-3-6H12z" fill="#fff" stroke="#222" strokeWidth=".6" />
    </svg>
  </div>
);

const CommandBar = () => (
  <div className="absolute bottom-0 left-[399px] right-[387px] flex h-[33px] border border-[#6a6e72] bg-[#b9bbbd]">
    <div className="flex w-[67px] shrink-0 items-center bg-linear-to-b from-[#6a6c6e] to-[#3c3d3e] pl-1">
      <Svg w={8} h={24}><path d="M1.5 2v20M6.5 2v20" stroke="#b0b0b0" strokeWidth="1.5" strokeDasharray="1.5 2" /></Svg>
      <button type="button" aria-label="Close command line" className="ml-[6px]">
        <Svg w={12} h={12}><path d="M1 1l10 10M11 1 1 11" stroke="#d8d8d8" strokeWidth="2.2" /></Svg>
      </button>
      <button type="button" aria-label="Customize command line" className="ml-[13px]">
        <Svg w={20} h={20}><path d="M2 2a6 6 0 0 1 8 7l8 7-2.5 3L8 11a6 6 0 0 1-7-7l4 3 2-2z" fill="#c4c4c4" /></Svg>
      </button>
    </div>
    <button type="button" aria-label="Recent commands" className="flex w-[46px] shrink-0 items-center gap-1 pl-[5px]">
      <Svg w={20} h={18}><rect width="20" height="18" rx="1" fill="#9ea2a8" /><path d="M4 4l5 5-5 5" stroke="#555a62" strokeWidth="2" /><path d="M11 13h6" stroke="#555a62" strokeWidth="2" /></Svg>
      <Tri color="#5a5a5a" />
    </button>
    <input aria-label="Command" placeholder="Type a command" className="min-w-0 flex-1 bg-transparent font-['Liberation_Mono',monospace] text-[18px] italic outline-none placeholder:text-[#76787a]" />
    <button type="button" aria-label="Command history" className="px-[6px]"><Tri size={9} color="#222" up /></button>
  </div>
);

const Canvas = () => (
  <main className="flex min-h-[600px] flex-1 bg-[#222631]">
    <div className="relative min-w-0 flex-1 overflow-hidden">
      <div className="px-[2px] pt-[6px] font-['Liberation_Sans'] text-[12px] leading-4 text-[#0c0e14]">[−][Top][2D Wireframe]</div>
      <DuctTable />
      <DotBlock />
      <CornerPlan />
      <RoofPlan />
      <ViewCube />
      <NavBar />
      <Pointer />
      <CommandBar />
      <div className="absolute right-[12px] top-[9px] flex items-center gap-[9px]">
        <button type="button" aria-label="Minimize drawing"><Svg w={11} h={12}><path d="M1 10h9" stroke="#d4dae4" strokeWidth="2.5" /></Svg></button>
        <button type="button" aria-label="Restore drawing"><Svg w={11} h={12}><path d="M1.5 4.5h6v6h-6zM4 2h6v6" stroke="#d4dae4" strokeWidth="1.8" /></Svg></button>
        <button type="button" aria-label="Close drawing window"><Svg w={10} h={12}><path d="M1.5 2l7 8M8.5 2l-7 8" stroke="#d4dae4" strokeWidth="2.2" /></Svg></button>
      </div>
    </div>
    <div className="w-[8px] bg-[#d8e3e9]" />
    <div className="w-[3px] bg-black" />
  </main>
);

/* ---------- bottom bars ---------- */

const LayoutTabs = () => (
  <div className="flex h-[26px] items-start border-t border-[#5a5c5e] bg-[#383838] pl-[13px] text-[14px] leading-[22px]">
    <button type="button" className="h-[22px] w-[74px] bg-linear-to-b from-[#5a5a5a] to-[#7c7c7c] font-bold text-white [clip-path:polygon(0_0,100%_0,66px_100%,8px_100%)]">Model</button>
    <button type="button" className="h-[22px] w-[80px] bg-[#4b4b4b] text-[#a2a2a2] [clip-path:polygon(2px_0,100%_0,73px_100%,8px_100%)]">Layout1</button>
    <button type="button" className="h-[22px] w-[82px] bg-[#4b4b4b] text-[#a2a2a2] [clip-path:polygon(2px_0,100%_0,74px_100%,8px_100%)]">Layout2</button>
    <button type="button" aria-label="New layout" className="ml-1 flex h-[22px] w-[30px] items-center justify-center bg-[#4b4b4b] [clip-path:polygon(4px_0,100%_0,25px_100%,0_100%)]">
      <Svg w={10} h={10}><path d="M5 0v10M0 5h10" stroke="#b4b4b4" strokeWidth="2" /></Svg>
    </button>
  </div>
);

const L = "#b4b4b4";
const B = "#2f8ae6";

const St = ({ name, cls, sep = false, children }: Kids & { name: string; cls: string; sep?: boolean }) => (
  <button type="button" aria-label={name} className={`flex h-full shrink-0 items-center justify-center ${sep ? "border-r border-[#7a7a7a]" : ""} ${cls}`}>
    {children}
  </button>
);
const StArrow = ({ name, cls, sep = false }: { name: string; cls: string; sep?: boolean }) => (
  <St name={name} cls={cls} sep={sep}><Tri size={8} /></St>
);

const StatusBar = () => (
  <footer className="flex h-[34px] justify-end bg-[#383838] pb-[2px] text-[14px] text-white">
    <div className="flex border-y border-l border-[#7a7a7a] bg-[#4e4e4e]">
      <output className="flex w-[226px] items-center justify-end border-r border-[#7a7a7a] pr-2 text-[#9e9e9e]">856.3955, 581.4635, 0.0000</output>
      <button type="button" className="w-[63px] border-r border-[#7a7a7a] text-center">MODEL</button>
      <St name="Grid" cls="w-[32px]">
        <Svg w={20} h={20}><path d="M5 1v18M9 1v18M13 1v18M17 1v18" stroke={L} strokeWidth="1.5" /><path d="M1 5h18M1 9h18M1 13h18M1 17h18" stroke={L} strokeDasharray="2 1" /></Svg>
      </St>
      <St name="Snap" cls="w-[28px]">
        <Svg w={18} h={18}><path d="M1 2h16M1 6h16M1 10h16M1 14h16M1 17h16" stroke={L} strokeWidth="1.5" strokeDasharray="1.5 2" /></Svg>
      </St>
      <StArrow name="Snap settings" cls="w-[21px]" sep />
      <St name="Infer constraints" cls="w-[34px] pl-1" sep>
        <Svg w={16} h={20}><path d="M5 14V2h7v6H8" stroke={L} strokeWidth="2" /><rect x="2" y="13" width="6" height="6" fill="#e4e4e4" /></Svg>
      </St>
      <St name="Dynamic input" cls="w-[30px]" sep>
        <Svg w={24} h={20}><path d="M6 2v9M1 7h9" stroke={B} strokeWidth="2" /><rect x="10" y="11" width="13" height="7" rx="1" fill={B} /></Svg>
      </St>
      <St name="Ortho" cls="w-[30px]"><Svg w={18} h={20}><path d="M2 2v15h16M2 10h6v7" stroke={L} strokeWidth="1.8" /></Svg></St>
      <St name="Polar" cls="w-[32px]"><Svg w={20} h={20}><circle cx="9" cy="11" r="7.5" stroke={L} strokeWidth="1.8" /><path d="M9 2v9h10M13 8l5 3-5 3" stroke={L} strokeWidth="1.5" /></Svg></St>
      <StArrow name="Polar settings" cls="w-[18px]" />
      <St name="Isometric" cls="w-[30px]"><Svg w={20} h={20}><path d="M2 1l17 18M10 1v13M6 19l4-6" stroke={L} strokeWidth="1.8" /></Svg></St>
      <StArrow name="Isometric settings" cls="w-[18px]" sep />
      <St name="Object snap tracking" cls="w-[31px]"><Svg w={22} h={20}><path d="M1 18h20" stroke={B} strokeWidth="3" /><path d="M4 16 17 2" stroke={B} strokeWidth="2" /></Svg></St>
      <St name="Object snap" cls="w-[30px]"><Svg w={22} h={20}><rect x="4" y="4" width="14" height="14" stroke={B} strokeWidth="2" /><rect x="1" y="1" width="7" height="7" fill="#0a3a12" stroke="#1a8a2a" /></Svg></St>
      <StArrow name="Object snap settings" cls="w-[19px]" sep />
      <St name="Lineweight" cls="w-[31px]" sep><Svg w={22} h={20}><path d="M1 2h20M1 7h14M1 13h20M1 18h11" stroke="#c8c8c8" strokeWidth="3" /></Svg></St>
      <St name="Transparency" cls="w-[31px]" sep>
        <Svg w={22} h={20}><rect x="1" width="20" height="20" fill={B} /><path d="M1 4l4-4M1 10 11 0M1 16 17 0M4 20 21 3M10 20l11-11M16 20l5-5M1 16l4 4M1 10l10 10M1 4l16 16M3 0l18 18M9 0l12 12M15 0l6 6" stroke="#1c62b0" /></Svg>
      </St>
      <St name="Selection cycling" cls="w-[31px]" sep>
        <Svg w={20} h={20}><path d="M4 1v7M1 4h7" stroke={L} strokeWidth="1.3" /><path d="M5 6h11v3" stroke={L} /><rect x="7" y="9" width="11" height="10" fill="#98b880" /></Svg>
      </St>
      <St name="3D object snap" cls="w-[32px]">
        <Svg w={22} h={20}><path d="M11 3l8 3v9l-7 4-8-3V7zM4 7l8 3 7-4M12 10v9" stroke="#c4c4c4" strokeWidth="1.5" /><rect x="1" y="1" width="6" height="6" fill="#0a3a12" stroke="#1a8a2a" /></Svg>
      </St>
      <StArrow name="3D snap settings" cls="w-[18px]" sep />
      <St name="Dynamic UCS" cls="w-[33px]"><Svg w={22} h={20}><path d="M3 1v16h18M3 17l9-8" stroke={B} strokeWidth="2" /><path d="M13 3l7-2v8l-5 3-3-5z" fill={B} /></Svg></St>
      <St name="Selection filter" cls="w-[29px]"><Svg w={20} h={20}><path d="M10 2l8 4v8l-8 5-8-5V6zM2 6l8 4 8-4M10 10v9" stroke="#969696" strokeWidth="1.5" /></Svg></St>
      <StArrow name="Filter settings" cls="w-[18px]" />
      <St name="Gizmo" cls="w-[31px]"><Svg w={20} h={20}><path d="M10 2l7 4v8l-7 5-7-5V6z" stroke="#8f8f98" strokeWidth="1.5" /><path d="M10 13V3M7 6l3-3 3 3" stroke="#5f80d0" strokeWidth="1.5" /><path d="M10 13l8 2" stroke="#c03a30" strokeWidth="2" /><path d="M10 13l-8 3" stroke="#4a903a" strokeWidth="2" /></Svg></St>
      <StArrow name="Gizmo settings" cls="w-[20px]" sep />
      <St name="Annotation visibility" cls="w-[33px]"><Svg w={22} h={20}><path d="M9 1l4 9 8 9h-6l-5-4-4 4H1l7-8z" fill={B} /><circle cx="16" cy="5" r="3.5" fill={B} /><path d="M5 3h8" stroke={B} strokeWidth="3" /></Svg></St>
      <St name="AutoScale" cls="w-[29px]"><Svg w={22} h={20}><path d="M10 2l2 8 8 9h-4l-6-4-5 4H1l7-8z" fill="#c4c4c4" /><path d="M18 1l-4 5h5l-4 5" stroke="#c4c4c4" strokeWidth="2" /></Svg></St>
      <St name="Annotation scale" cls="w-[30px]"><Svg w={22} h={20}><path d="M10 1h2l2 9 7 6v3h-4l-6-4-6 4H1v-3l7-6z" fill="#c4c4c4" /></Svg></St>
      <button type="button" className="flex w-[90px] items-center justify-center gap-[6px] border-r border-[#7a7a7a] whitespace-nowrap">1:1 / 100%<Tri size={8} /></button>
      <St name="Workspace switching" cls="w-[33px]"><Svg w={18} h={18}><circle cx="9" cy="9" r="4.5" stroke="#c4c4c4" strokeWidth="4" /><path d="M9 0v4M9 14v4M0 9h4M14 9h4M3 3l2 2M13 13l2 2M15 3l-2 2M3 15l2-2" stroke="#c4c4c4" strokeWidth="3" /></Svg></St>
      <StArrow name="Workspace list" cls="w-[18px]" sep />
      <St name="Annotation monitor" cls="w-[32px]" sep><Svg w={18} h={18}><path d="M9 0v18M0 9h18" stroke="#c4c4c4" strokeWidth="2.5" /></Svg></St>
      <label htmlFor="units" className="flex w-[34px] items-center justify-center"><Svg w={8} h={20}><rect x="0" y="1" width="7" height="18" fill="#c4c4c4" /><path d="M4 4h4M4 7h4M4 10h4M4 13h4M4 16h4" stroke="#4e4e4e" /></Svg></label>
      <div className="relative flex w-[90px] border-r border-[#7a7a7a]">
        <select id="units" aria-label="Units" className="w-full appearance-none bg-transparent pl-[5px] outline-none"><option>Decimal</option></select>
        <span className="pointer-events-none absolute right-[5px] top-[11px]"><Tri size={8} /></span>
      </div>
      <St name="Quick properties" cls="w-[31px]" sep><Svg w={12} h={16}><rect x="1" y="1" width="10" height="13" stroke="#b8b8b8" strokeWidth="1.5" /><path d="M3 5h6M3 8h6M3 11h6M5 4v8" stroke="#b8b8b8" /></Svg></St>
      <St name="Lock UI" cls="w-[34px]"><Svg w={22} h={20}><path d="M2 13V1h17v5M2 3h17M2 13h6" stroke={L} strokeWidth="2" /><rect x="9" y="12" width="8" height="7" fill="#d4d4d4" /><path d="M15 12V9c0-3 5-3 5 0v2" stroke={L} strokeWidth="1.5" /></Svg></St>
      <StArrow name="Lock settings" cls="w-[18px]" sep />
      <St name="Isolate objects" cls="w-[32px]" sep><Svg w={20} h={20}><rect x="1" y="2" width="7" height="7" stroke={L} strokeWidth="1.5" /><circle cx="15" cy="8" r="4" stroke={L} strokeWidth="1.5" /><path d="M8 12l4 7H4z" stroke={L} strokeWidth="1.5" /></Svg></St>
      <St name="Hardware acceleration" cls="w-[34px]" sep><Svg w={22} h={22}><circle cx="11" cy="11" r="10" fill="#1a72d2" /><path d="M5 11l4 5 9-9M14 16h4" stroke="#0f4f9c" strokeWidth="1.8" /></Svg></St>
      <St name="Trusted DWG" cls="w-[31px]" sep><Svg w={20} h={20}><circle cx="4" cy="4" r="3" fill="#f0f0f0" /><path d="M6 5h10v6H6z" fill="#3f78b8" /><path d="M1 8h12v4H1zM1 14h9v4H1z" fill="#f0e040" /><path d="M9 14l4 4 6-7" stroke="#4aa828" strokeWidth="3" /></Svg></St>
      <St name="Clean screen" cls="w-[32px]"><Svg w={22} h={18}><rect x="1" y="1" width="20" height="16" stroke={L} strokeWidth="1.5" /><path d="M4 14l5-4M4 10v4h5M18 4l-5 4M13 4h5v4" stroke="#d4d4d4" strokeWidth="1.8" /></Svg></St>
      <St name="Customization" cls="w-[31px]"><Svg w={20} h={18}><path d="M0 2h20M0 9h20M0 16h20" stroke="#c4c4c4" strokeWidth="2.5" /></Svg></St>
    </div>
  </footer>
);

export default function App() {
  return (
    <div className="flex min-h-screen flex-col bg-[#383838] font-['Open_Sans','DejaVu_Sans',sans-serif]">
      <Header />
      <Ribbon />
      <FileTabs />
      <Canvas />
      <LayoutTabs />
      <StatusBar />
    </div>
  );
}
